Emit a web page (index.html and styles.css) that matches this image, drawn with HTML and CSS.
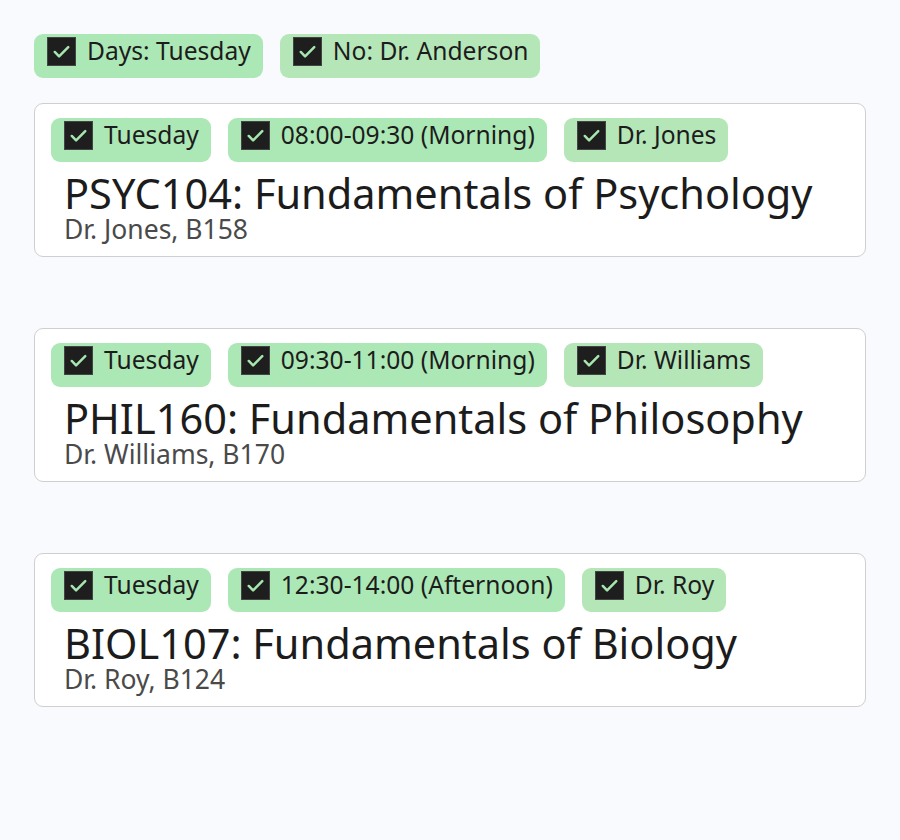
FILE: index.html
```html
<!DOCTYPE html>
<html>
<head>
<meta charset="utf-8">
<link rel="stylesheet" href="styles.css">
</head>
<body>
<div class="page">
  <div class="chips top">
    <span class="chip"><span class="box"><svg viewBox="0 0 28 28"><path d="M7 14.5l4.5 4.5L21 9.5"/></svg></span>Days: Tuesday</span>
    <span class="chip alt"><span class="box"><svg viewBox="0 0 28 28"><path d="M7 14.5l4.5 4.5L21 9.5"/></svg></span>No: Dr. Anderson</span>
  </div>

  <div class="card">
    <div class="chips">
      <span class="chip"><span class="box"><svg viewBox="0 0 28 28"><path d="M7 14.5l4.5 4.5L21 9.5"/></svg></span>Tuesday</span>
      <span class="chip"><span class="box"><svg viewBox="0 0 28 28"><path d="M7 14.5l4.5 4.5L21 9.5"/></svg></span>08:00-09:30 (Morning)</span>
      <span class="chip alt"><span class="box"><svg viewBox="0 0 28 28"><path d="M7 14.5l4.5 4.5L21 9.5"/></svg></span>Dr. Jones</span>
    </div>
    <div class="info">
      <div class="title">PSYC104: Fundamentals of Psychology</div>
      <div class="sub">Dr. Jones, B158</div>
    </div>
  </div>

  <div class="card">
    <div class="chips">
      <span class="chip"><span class="box"><svg viewBox="0 0 28 28"><path d="M7 14.5l4.5 4.5L21 9.5"/></svg></span>Tuesday</span>
      <span class="chip"><span class="box"><svg viewBox="0 0 28 28"><path d="M7 14.5l4.5 4.5L21 9.5"/></svg></span>09:30-11:00 (Morning)</span>
      <span class="chip alt"><span class="box"><svg viewBox="0 0 28 28"><path d="M7 14.5l4.5 4.5L21 9.5"/></svg></span>Dr. Williams</span>
    </div>
    <div class="info">
      <div class="title">PHIL160: Fundamentals of Philosophy</div>
      <div class="sub">Dr. Williams, B170</div>
    </div>
  </div>

  <div class="card">
    <div class="chips">
      <span class="chip"><span class="box"><svg viewBox="0 0 28 28"><path d="M7 14.5l4.5 4.5L21 9.5"/></svg></span>Tuesday</span>
      <span class="chip"><span class="box"><svg viewBox="0 0 28 28"><path d="M7 14.5l4.5 4.5L21 9.5"/></svg></span>12:30-14:00 (Afternoon)</span>
      <span class="chip alt"><span class="box"><svg viewBox="0 0 28 28"><path d="M7 14.5l4.5 4.5L21 9.5"/></svg></span>Dr. Roy</span>
    </div>
    <div class="info">
      <div class="title">BIOL107: Fundamentals of Biology</div>
      <div class="sub">Dr. Roy, B124</div>
    </div>
  </div>
</div>
</body>
</html>
```

FILE: styles.css
```css
html, body {
  margin: 0;
  padding: 0;
  background: #f9fafe;
}
body {
  font-family: "Noto Sans", "Open Sans", sans-serif;
  color: #1c1c1c;
}
.page {
  padding: 34px 34px 0 34px;
  display: flex;
  flex-direction: column;
}
.chips {
  display: flex;
  gap: 17px;
}
.chips.top {
  margin-bottom: 25px;
}
.chip {
  display: flex;
  align-items: center;
  height: 44px;
  box-sizing: border-box;
  padding: 0 12px 10px 13px;
  background: #ace8b5;
  border-radius: 9px;
  font-size: 24.6px;
  line-height: 32px;
}
.chip.alt {
  background: #b5e6b8;
}
.box {
  width: 29px;
  height: 29px;
  box-sizing: border-box;
  background: #1e1e1e;
  border: 1px solid #444;
  margin-right: 11px;
  display: flex;
}
.box svg {
  width: 100%;
  height: 100%;
  fill: none;
  stroke: #a8e6b0;
  stroke-width: 2.6;
  stroke-linecap: round;
  stroke-linejoin: round;
}
.card {
  width: 832px;
  height: 154px;
  box-sizing: border-box;
  background: #fff;
  border: 1.5px solid #cfcfcf;
  border-radius: 9px;
  padding: 14px 16px;
  margin-bottom: 71px;
}
.info {
  padding-left: 13px;
}
.title {
  font-size: 41.5px;
  line-height: 42px;
  margin-top: 10px;
  white-space: nowrap;
}
.sub {
  font-size: 26.5px;
  line-height: 28px;
  color: #4a4a4a;
  margin-top: 1px;
}
```
